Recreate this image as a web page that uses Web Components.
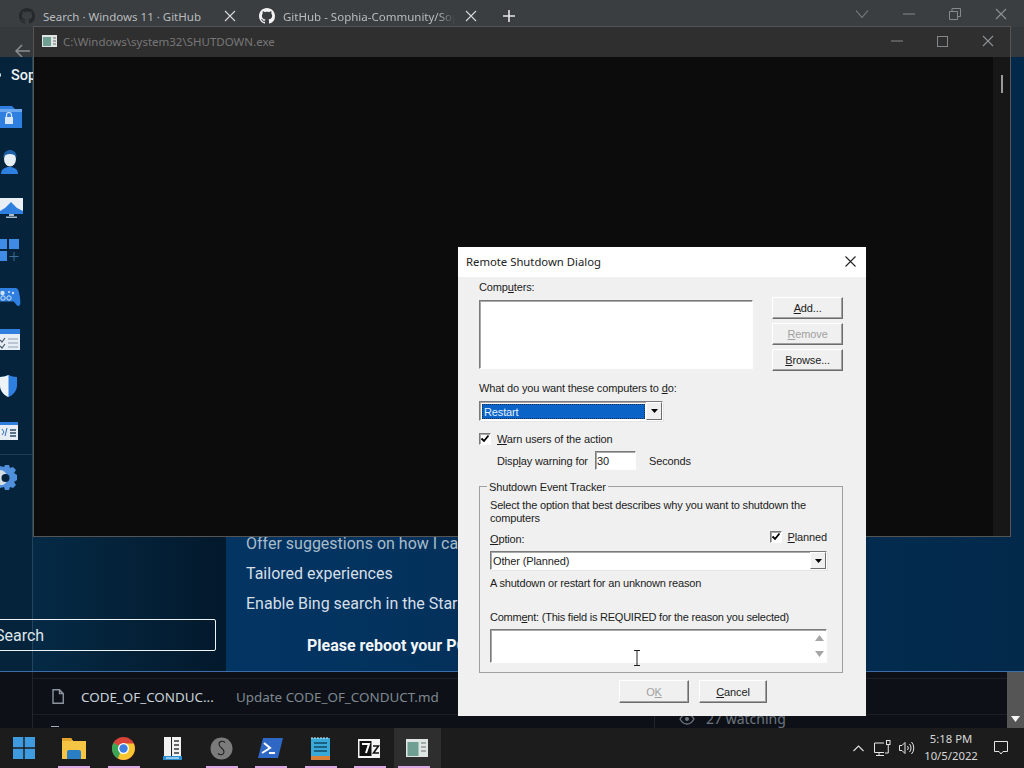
<!DOCTYPE html>
<html>
<head>
<meta charset="utf-8">
<title>Remote Shutdown Dialog</title>
<style>
  html, body { margin: 0; width: 1024px; height: 768px; overflow: hidden; background: #0d1117; }
</style>
</head>
<body>
<desktop-screen>
  <browser-window></browser-window>
  <console-window></console-window>
  <shutdown-dialog></shutdown-dialog>
  <win-taskbar slot="bar"></win-taskbar>
</desktop-screen>

<script>
// small helper so every element is just a style + markup string
function shadow(el, html) {
  el.attachShadow({ mode: 'open' }).innerHTML = html
}

const GH_PATH = 'M8 0C3.58 0 0 3.58 0 8c0 3.54 2.29 6.53 5.47 7.59.4.07.55-.17.55-.38 0-.19-.01-.82-.01-1.49-2.01.37-2.53-.49-2.69-.94-.09-.23-.48-.94-.82-1.13-.28-.15-.68-.52-.01-.53.63-.01 1.08.58 1.23.82.72 1.21 1.87.87 2.33.66.07-.52.28-.87.51-1.07-1.78-.2-3.64-.89-3.64-3.95 0-.87.31-1.59.82-2.15-.08-.2-.36-1.02.08-2.12 0 0 .67-.21 2.2.82.64-.18 1.32-.27 2-.27.68 0 1.36.09 2 .27 1.53-1.04 2.2-.82 2.2-.82.44 1.1.16 1.92.08 2.12.51.56.82 1.27.82 2.15 0 3.07-1.87 3.75-3.65 3.95.29.25.54.73.54 1.48 0 1.07-.01 1.93-.01 2.2 0 .21.15.46.55.38A8.013 8.013 0 0016 8c0-4.42-3.58-8-8-8z'

const X_ICON = c => `<svg width="12" height="12" viewBox="0 0 12 12"><path d="M1 1l10 10M11 1L1 11" stroke="${c}" stroke-width="1.1" fill="none"/></svg>`

class DesktopScreen extends HTMLElement {
  constructor() {
    super()
    shadow(this, `
    <style>
      :host { display: grid; grid-template-rows: 728px 40px; width: 1024px; height: 768px; position: relative; overflow: hidden; }
    </style>
    <slot></slot>
    <slot name="bar"></slot>`)
  }
}

class BrowserWindow extends HTMLElement {
  constructor() {
    super()
    shadow(this, `
    <style>
      :host { display: flex; flex-direction: column; height: 728px; font-family: "Noto Sans", sans-serif; }
      .tabs { height: 27px; background: #3a3e41; display: flex; align-items: center; color: #b9bcbe; font-size: 11.5px; position: relative; }
      .tab { display: flex; align-items: center; height: 27px; box-sizing: border-box; padding-top: 5px; }
      .t1 { width: 244px; padding-left: 19px; }
      .t1 svg { margin-right: 8px; flex: none; }
      .t1 span { width: 184px; white-space: nowrap; }
      .t2 { width: 244px; padding-left: 15px; }
      .t2 svg { margin-right: 8px; flex: none; }
      .t2 span { width: 172px; margin-right: 10px; white-space: nowrap; overflow: hidden; -webkit-mask-image: linear-gradient(90deg,#000 90%,transparent); }
      .plus { margin: 5px 0 0 15px; width: 12px; height: 12px; }
      .ctl { margin-left: auto; display: flex; align-items: center; gap: 34px; padding-right: 17px; }
      .nav { height: 30px; background: #35393c; padding: 17px 0 0 15px; display: flex; align-items: center; box-sizing: border-box; }
      .app { height: 614px; display: flex; border-bottom: 1px solid #3b6ea8; box-sizing: content-box; font-family: Roboto, sans-serif; color: #e8edf2; }
      .side { width: 33px; flex: none; background: #05233a; border-right: 1px solid #24445c; box-sizing: border-box; padding-top: 38px; display: flex; flex-direction: column; }
      .side div { height: 45px; box-sizing: border-box; display: flex; align-items: center; }
      .side .last { border-bottom: 1px solid #1e3d52; }
      .left { width: 193px; flex: none; background: linear-gradient(90deg,#052a45,#03192c); padding-top: 562px; box-sizing: border-box; }
      .search { margin-left: -73px; width: 256px; height: 32px; box-sizing: border-box; border: 1px solid #eef3f7; border-radius: 2px; font-size: 16px; line-height: 31px; padding-left: 34px; color: #dfe6ec; }
      .right { flex: 1; background: linear-gradient(90deg,#033563,#03305a 35%,#02294a); padding: 472px 0 0 20px; font-size: 16px; line-height: 30px; white-space: nowrap; color: #d5dfe8; overflow: hidden; }
      .right div:first-child { color: #a9bccb; }
      .right b { display: block; margin: 12px 0 0 61px; color: #f2f6f9; font-weight: 700; }
      .brand { position: absolute; left: 11px; top: 67px; font: 500 14.5px Roboto, sans-serif; color: #eef3f7; }
      .dot { position: absolute; left: -2px; top: 73px; width: 3px; height: 4px; background: #cfd8df; border-radius: 2px; }
      .files { flex: 1; background: #0d1117; position: relative; font-size: 13.4px; display: flex; overflow: hidden; }
      .gutter { width: 32px; flex: none; border-right: 1px solid #21262d; }
      .rows { flex: 1; padding-top: 6px; }
      .row { height: 37px; border-top: 1px solid #1b2027; border-bottom: 1px solid #1b2027; display: flex; align-items: center; box-sizing: border-box; padding-left: 19px; }
      .row svg { margin-right: 17px; flex: none; }
      .name { width: 155px; color: #c9d1d9; white-space: nowrap; }
      .msg { color: #7f8790; white-space: nowrap; }
      .watch { position: absolute; left: 679px; top: 37px; color: #6e7681; font-size: 14px; display: flex; gap: 11px; align-items: center; }
      .rule { position: absolute; left: 654px; top: 40px; width: 1px; height: 20px; background: #21262d; }
      .tick { position: absolute; left: 51px; top: 54px; width: 8px; height: 1px; background: #aab; }
      .bar { width: 17px; flex: none; background: #555; position: relative; }
      .bar svg { position: absolute; left: 4px; top: 44px; }
    </style>
    <div class="tabs">
      <div class="tab t1">
        <svg width="16" height="16" viewBox="0 0 16 16"><path fill="#26292c" d="${GH_PATH}"/></svg>
        <span>Search · Windows 11 · GitHub</span>
        ${X_ICON('#d6d8da')}
      </div>
      <div class="tab t2">
        <svg width="16" height="16" viewBox="0 0 16 16"><path fill="#f2f2f2" d="${GH_PATH}"/></svg>
        <span>GitHub - Sophia-Community/Sophia</span>
        ${X_ICON('#d6d8da')}
      </div>
      <svg class="plus" viewBox="0 0 12 12"><path d="M6 0v12M0 6h12" stroke="#e6e6e6" stroke-width="1.6"/></svg>
      <div class="ctl">
        <svg width="14" height="10" viewBox="0 0 14 10"><path d="M1 1.5l6 7 6-7" fill="none" stroke="#7d8184" stroke-width="1.1"/></svg>
        <svg width="12" height="2" viewBox="0 0 12 2"><path d="M0 1h12" stroke="#85888b"/></svg>
        <svg width="12" height="12" viewBox="0 0 12 12"><path d="M.5 3.5h8v8h-8zM3 3V.5h8.500v8H9" fill="none" stroke="#85888b"/></svg>
        ${X_ICON('#8f9295')}
      </div>
    </div>
    <div class="nav">
      <svg width="15" height="14" viewBox="0 0 15 14"><path d="M15 7H1.500M7 1L1 7l6 6" fill="none" stroke="#8c8f92" stroke-width="1.500"/></svg>
    </div>
    <div class="app">
      <div class="side">
        <div><svg style="margin-top:-4px" width="32" height="24" viewBox="0 0 32 24"><path d="M0 2h12l3 3h7v19H0z" fill="#2f7fe0"/><path d="M0 5h22v3H0z" fill="#69a8ee"/><rect x="5" y="13" width="8" height="7" fill="#d8e8fa"/><path d="M6.500 13v-2a2.500 2.500 0 015 0v2" fill="none" stroke="#d8e8fa" stroke-width="1.200"/></svg></div>
        <div><svg style="margin-top:-2px" width="32" height="24" viewBox="0 0 32 24"><path d="M1 24c0-5 4-7 8.500-7s8.500 2 8.500 7z" fill="#2f7fe0"/><ellipse cx="10" cy="9" rx="6" ry="7.500" fill="#e6eef6"/><path d="M3.500 8C3 2 7 0 10 0s7 2 6.500 8c-1-3-3-4-6.500-4S4.500 5 3.500 8z" fill="#1d5fa8"/></svg></div>
        <div><svg width="32" height="24" viewBox="0 0 32 24"><rect x="0" y="2" width="23" height="16" fill="#e9eff5"/><path d="M0 15l5-3 6-6 6 6 6 3v3H0z" fill="#2f7fe0"/><path d="M9 18h5v2H9zM6 20.500h11V22H6z" fill="#a9bccb"/></svg></div>
        <div><svg style="margin-top:-6px" width="32" height="24" viewBox="0 0 32 24"><path d="M0 1h7v10H0zM9 1h10v10H9zM0 13h7v10H0z" fill="#3f8be6"/><path d="M14 14v9M9.500 18.500h9" stroke="#3f6f96" stroke-width="1"/></svg></div>
        <div><svg style="margin-top:-2px" width="32" height="24" viewBox="0 0 32 24"><path d="M0 3h15c3 0 4 2 5 10 .7 5 .5 8-1.500 8-2 0-3-3-5-4.500H0z" fill="#2f7fe0"/><circle cx="2.500" cy="8" r="2.200" fill="#cfe2f7"/><circle cx="9" cy="13" r="2.200" fill="none" stroke="#cfe2f7"/><circle cx="3" cy="13" r="2.200" fill="none" stroke="#cfe2f7"/><circle cx="13" cy="8" r="1.200" fill="#cfe2f7"/><circle cx="9" cy="7" r="1" fill="#cfe2f7"/></svg></div>
        <div><svg style="margin-top:-8px" width="32" height="24" viewBox="0 0 32 24"><rect x="0" y="2" width="20" height="21" fill="#e6edf5"/><rect x="0" y="2" width="20" height="5" fill="#2f7fe0"/><path d="M0 13l2 2 3-4M0 19l2 2 3-4" fill="none" stroke="#4a5a6a" stroke-width="1.200"/><path d="M8 12h10M8 16h10M8 20h10" stroke="#8fa0b0"/></svg></div>
        <div><svg style="margin-top:-4px" width="32" height="24" viewBox="0 0 32 24"><path d="M0 3C3 3 6 2 8.500 1 11 2 14 3 17 3v8c0 6-4 10-8.500 12C4 21 0 17 0 11z" fill="#2f7fe0"/><path d="M0 3c3 0 6-1 8.500-2v22C4 21 0 17 0 11z" fill="#eef3f8"/></svg></div>
        <div class="last"><svg style="margin-top:-2px" width="32" height="24" viewBox="0 0 32 24"><rect x="0" y="3" width="18" height="18" fill="#e6edf5"/><rect x="0" y="3" width="18" height="3" fill="#2f7fe0"/><path d="M2 10l2 3-2 3M7 9l-2 8" fill="none" stroke="#2f6fb8"/><path d="M10 11h6M10 14h6M10 17h6" stroke="#2c4a66" stroke-width="1.300"/></svg></div>
        <div><svg width="32" height="26" viewBox="0 0 32 26"><path d="M5 0h4l1 3 3-1 3 3-2 3 3 2v5l-3 2 2 3-3 3-3-1-1 3H5l-1-3-4 1V1l4 1z" fill="#4f8fdc"/><path d="M0 5a8 8 0 013 15H0z" fill="#d5dde5"/><circle cx="5.500" cy="13" r="4" fill="#06243c"/></svg></div>
      </div>
      <div class="left"><div class="search">Search</div></div>
      <div class="right">
        <div>Offer suggestions on how I can further customize my device</div>
        <div>Tailored experiences</div>
        <div>Enable Bing search in the Start Menu</div>
        <b>Please reboot your PC</b>
      </div>
    </div>
    <div class="files">
      <div class="gutter"></div>
      <div class="rows">
        <div class="row">
          <svg width="12" height="15" viewBox="0 0 12 15"><path d="M1 .75h6.500l3.750 3.750V14.250H1zM7.500.75V4.500h3.750" fill="none" stroke="#8b949e" stroke-width="1.400"/></svg>
          <span class="name">CODE_OF_CONDUC...</span>
          <span class="msg">Update CODE_OF_CONDUCT.md</span>
        </div>
      </div>
      <div class="bar"><svg width="9" height="6" viewBox="0 0 9 6"><path d="M0 0h9L4.500 6z" fill="#f4f4f4"/></svg></div>
      <div class="tick"></div>
      <div class="rule"></div>
      <div class="watch">
        <svg width="16" height="12" viewBox="0 0 16 12"><path d="M1 6c2-3.500 4.500-5 7-5s5 1.500 7 5c-2 3.500-4.500 5-7 5S3 9.500 1 6z" fill="none" stroke="#6e7681" stroke-width="1.300"/><circle cx="8" cy="6" r="2" fill="#6e7681"/></svg>
        <span>27 watching</span>
      </div>
    </div>
    <div class="brand">Sop</div>
    <div class="dot"></div>`)
  }
}

class ConsoleWindow extends HTMLElement {
  constructor() {
    super()
    shadow(this, `
    <style>
      :host { position: absolute; left: 33px; top: 26px; width: 978px; height: 511px; box-sizing: border-box; border: 1px solid #555; display: flex; flex-direction: column; font-family: "Noto Sans", sans-serif; background: #0c0c0c; }
      .title { height: 30px; flex: none; background: #2f2f2f; display: flex; align-items: center; padding: 0 0 2px 8px; box-sizing: border-box; color: #777; font-size: 11.5px; }
      .title svg.app { margin-right: 6px; }
      .btns { margin-left: auto; display: flex; align-items: center; gap: 34px; padding-right: 16px; }
      .body { flex: 1; display: flex; justify-content: flex-end; }
      .sb { width: 17px; background: #171717; padding: 18px 0 0 8px; box-sizing: border-box; }
      .thumb { width: 2px; height: 18px; background: #9a9a9a; }
    </style>
    <div class="title">
      <svg class="app" width="15" height="12" viewBox="0 0 15 12"><rect width="15" height="12" fill="#dfe5e2"/><rect x="1" y="2" width="8" height="9" fill="#6f9f92"/><path d="M11 3h3M11 6h3M11 9h3" stroke="#6b6f70"/></svg>
      <span>C:\\Windows\\system32\\SHUTDOWN.exe</span>
      <div class="btns">
        <svg width="12" height="2" viewBox="0 0 12 2"><path d="M0 1h12" stroke="#85888b"/></svg>
        <svg width="11" height="11" viewBox="0 0 11 11"><rect x=".5" y=".5" width="10" height="10" fill="none" stroke="#85888b"/></svg>
        ${X_ICON('#8f9295')}
      </div>
    </div>
    <div class="body"><div class="sb"><div class="thumb"></div></div></div>`)
  }
}

class ClassicButton extends HTMLElement {
  constructor() {
    super()
    shadow(this, `
    <style>
      :host { display: flex; align-items: center; justify-content: center; box-sizing: border-box; height: 22px; background: #f0f0f0; border: 1px solid; border-color: #fff #6d6d6d #6d6d6d #fff; box-shadow: inset -1px -1px 0 #a0a0a0; }
      :host([disabled]) { color: #a0a0a0; }
    </style>
    <slot></slot>`)
  }
}

class SunkenField extends HTMLElement {
  constructor() {
    super()
    shadow(this, `
    <style>
      :host { display: block; box-sizing: border-box; background: #fff; border: 1px solid; border-color: #7a7a7a #fdfdfd #fdfdfd #7a7a7a; box-shadow: inset 1px 1px 0 #a9a9a9; }
    </style>
    <slot></slot>`)
  }
}

class ClassicCombo extends HTMLElement {
  constructor() {
    super()
    const on = this.hasAttribute('selected')
    shadow(this, `
    <style>
      :host { display: flex; box-sizing: border-box; height: 20px; background: #fff; border: 1px solid; border-color: #7a7a7a #fdfdfd #fdfdfd #7a7a7a; box-shadow: inset 1px 1px 0 #a9a9a9, 1px 1px 0 #e6e6e6; }
      .val { flex: 1; margin: 2px 1px 1px 2px; white-space: nowrap; ${on ? 'padding:0 2px;line-height:16px;background:#0a64c8;color:#e4f0fb;outline:1px dotted #17324e;outline-offset:-1px;' : 'padding:0;line-height:15px;'} }
      .arrow { width: 16px; flex: none; background: #f0f0f0; border: 1px solid; border-color: #fff #6d6d6d #6d6d6d #fff; box-sizing: border-box; display: flex; align-items: center; justify-content: center; }
    </style>
    <div class="val"><slot></slot></div>
    <div class="arrow"><svg width="7" height="4" viewBox="0 0 7 4"><path d="M0 0h7L3.500 4z" fill="#000"/></svg></div>`)
  }
}

class ClassicCheck extends HTMLElement {
  constructor() {
    super()
    shadow(this, `
    <style>
      :host { display: flex; align-items: center; gap: 6px; height: 14px; line-height: 14px; white-space: nowrap; }
      .box { width: 12px; height: 12px; box-sizing: border-box; background: #fff; border: 1px solid; border-color: #7a7a7a #fdfdfd #fdfdfd #7a7a7a; box-shadow: inset 1px 1px 0 #a9a9a9; flex: none; }
      svg { display: block; }
    </style>
    <div class="box"><svg width="10" height="10" viewBox="0 0 10 10"><path d="M1.500 4.500L4 7l4.500-5.500" fill="none" stroke="#000" stroke-width="1.800"/></svg></div>
    <span><slot></slot></span>`)
  }
}

class ShutdownDialog extends HTMLElement {
  constructor() {
    super()
    shadow(this, `
    <style>
      :host { position: absolute; left: 458px; top: 247px; width: 408px; height: 469px; display: flex; flex-direction: column; background: #f0f0f0; color: #1c1c1c; font: 11px/14px "Liberation Sans", sans-serif; letter-spacing: -.14px; box-shadow: 0 0 1px #222; }
      .title { height: 30px; flex: none; background: #fff; display: flex; align-items: center; justify-content: space-between; padding: 0 10px 2px 8px; box-sizing: border-box; font: 11.3px "Noto Sans", sans-serif; letter-spacing: 0; color: #222; }
      .title svg { display: block; }
      .body { padding: 3px 23px 0 21px; display: flex; flex-direction: column; }
      .top { display: flex; gap: 19px; }
      .col { width: 275px; }
      .list { height: 69px; margin-top: 6px; }
      .stack { width: 71px; margin-top: 17px; display: flex; flex-direction: column; gap: 4px; }
      .ask { margin-top: 10px; }
      .combo1 { width: 184px; margin-top: 6px; }
      .warn { margin-top: 11px; }
      .delay { margin: 5px 0 0 18px; height: 19px; display: flex; align-items: center; white-space: nowrap; }
      .delay > span:first-child { width: 98px; }
      .secs { width: 41px; height: 19px; margin-right: 13px; padding-left: 1px; line-height: 18px; }
      .group { position: relative; margin-top: 16px; height: 187px; box-sizing: border-box; border: 1px solid #a0a0a0; padding: 12px 15px 0 10px; display: flex; flex-direction: column; }
      .legend { position: absolute; left: 7px; top: -7px; background: #f0f0f0; padding: 0 2px; white-space: nowrap; }
      .desc { line-height: 13px; white-space: nowrap; letter-spacing: -.18px; }
      .opt { display: flex; justify-content: space-between; margin-top: 6px; height: 14px; }
      .opt span { padding-top: 1px; }
      .opt classic-check { margin-top: -1px; }
      .combo2 { margin-top: 6px; height: 19px; }
      .why { margin-top: 6px; letter-spacing: -.18px; }
      .cmt { margin-top: 20px; letter-spacing: -.23px; white-space: nowrap; }
      .txt { position: relative; height: 34px; margin-top: 5px; box-shadow: inset 1px 1px 0 #a9a9a9; }
      .spin { position: absolute; right: 0; top: 0; bottom: 0; width: 14px; display: flex; flex-direction: column; justify-content: center; gap: 10px; align-items: center; }
      .spin svg { display: block; }
      .beam { position: absolute; left: 142px; top: 20px; }
      .actions { display: flex; gap: 10px; margin: 7px 0 0 140px; }
      .actions classic-button { height: 23px; }
      u { text-decoration-thickness: 1px; }
    </style>
    <div class="title">
      <span>Remote Shutdown Dialog</span>
      <svg width="11" height="11" viewBox="0 0 11 11"><path d="M.5.500l10 10M10.500.500l-10 10" stroke="#222" stroke-width="1.100"/></svg>
    </div>
    <div class="body">
      <div class="top">
        <div class="col">
          <div>Comp<u>u</u>ters:</div>
          <sunken-field class="list"></sunken-field>
        </div>
        <div class="stack">
          <classic-button><u>A</u>dd...</classic-button>
          <classic-button disabled><u>R</u>emove</classic-button>
          <classic-button><u>B</u>rowse...</classic-button>
        </div>
      </div>
      <div class="ask">What do you want these computers to <u>d</u>o:</div>
      <classic-combo class="combo1" selected>Restart</classic-combo>
      <classic-check class="warn"><u>W</u>arn users of the action</classic-check>
      <div class="delay">
        <span>Disp<u>l</u>ay warning for</span>
        <sunken-field class="secs">30</sunken-field>
        <span>Seconds</span>
      </div>
      <div class="group">
        <div class="legend">Shutdown Event Tracker</div>
        <div class="desc">Select the option that best describes why you want to shutdown the<br>computers</div>
        <div class="opt">
          <span><u>O</u>ption:</span>
          <classic-check><u>P</u>lanned</classic-check>
        </div>
        <classic-combo class="combo2">Other (Planned)</classic-combo>
        <div class="why">A shutdown or restart for an unknown reason</div>
        <div class="cmt">Comm<u>e</u>nt: (This field is REQUIRED for the reason you selected)</div>
        <sunken-field class="txt">
          <div class="spin">
            <svg width="9" height="6" viewBox="0 0 9 6"><path d="M0 6h9L4.500 0z" fill="#a6a6a6"/></svg>
            <svg width="9" height="6" viewBox="0 0 9 6"><path d="M0 0h9L4.500 6z" fill="#a6a6a6"/></svg>
          </div>
          <svg class="beam" width="8" height="16" viewBox="0 0 8 16"><path d="M1 .5h6M1 15.500h6M4 .5v15" fill="none" stroke="#222" stroke-width="1"/></svg>
        </sunken-field>
      </div>
      <div class="actions">
        <classic-button disabled style="width:70px">O<u>K</u></classic-button>
        <classic-button style="width:68px"><u>C</u>ancel</classic-button>
      </div>
    </div>`)
  }
}

class TaskButton extends HTMLElement {
  constructor() {
    super()
    shadow(this, `
    <style>
      :host { display: flex; align-items: center; justify-content: center; width: 49.25px; height: 40px; position: relative; flex: none; }
      :host([active]) { background: #2e2e2e; width: 47px; padding-right: 2px; box-sizing: border-box; }
      :host([running])::after { content: ""; position: absolute; left: 9px; bottom: 0; width: 32px; height: 2px; background: #dba8e4; }
      :host([active])::after { left: 4px; }
    </style>
    <slot></slot>`)
  }
}

class WinTaskbar extends HTMLElement {
  constructor() {
    super()
    shadow(this, `
    <style>
      :host { display: flex; align-items: center; height: 40px; background: #1c1c1c; color: #e6e6e6; font: 11.3px "Noto Sans", sans-serif; }
      .tray { margin-left: auto; display: flex; align-items: center; height: 40px; }
      .tray svg { display: block; }
      .caret { margin-right: 10px; }
      .net { margin-right: 8px; }
      .vol { margin-right: 6px; }
      .clock { width: 60px; text-align: center; line-height: 17px; color: #d8d8d8; padding-bottom: 2px; }
      .note { margin: 0 16px 0 13px; }
    </style>
    <slot></slot>
    <task-button style="padding-right:1px;box-sizing:border-box">
      <svg width="22" height="22" viewBox="0 0 22 22"><path d="M0 0h10.300v10.300H0zM11.700 0H22v10.300H11.700zM0 11.700h10.300V22H0zM11.700 11.700H22V22H11.700z" fill="#3f9be0"/></svg>
    </task-button>
    <task-button running>
      <svg width="24" height="22" viewBox="0 0 24 22"><path d="M0 1h9l2 3h13v18H0z" fill="#f6c544"/><path d="M0 1h9l2 3H0z" fill="#e5a52a"/><path d="M5 15q0-2 2-2h10q2 0 2 2v7H5z" fill="#2a7fc4"/></svg>
    </task-button>
    <task-button running>
      <svg width="23" height="23" viewBox="0 0 23 23"><circle cx="11.500" cy="11.500" r="11.500" fill="#d9433a"/><path d="M1.500 5.800A11.500 11.500 0 006 21.600l5.500-10z" fill="#3aa655"/><path d="M11.500 6.500h10.300A11.500 11.500 0 016 21.600z" fill="#f7c52f"/><circle cx="11.500" cy="11.500" r="5.500" fill="#fff"/><circle cx="11.500" cy="11.500" r="4.200" fill="#3f7fe0"/></svg>
    </task-button>
    <task-button>
      <svg width="19" height="23" viewBox="0 0 19 23"><path d="M1 0h7v19H1zM9 0h9v19H9z" fill="#f1f1f1"/><path d="M11 3h5v2h-5zM11 7h5v2h-5zM11 11h5v2h-5zM11 15h5v2h-5z" fill="#666"/><path d="M0 19h19v4H0z" fill="#2a8fd0"/><path d="M3 20.500h13v1H3z" fill="#fff"/></svg>
    </task-button>
    <task-button running>
      <svg width="23" height="23" viewBox="0 0 23 23"><circle cx="11.500" cy="11.500" r="11" fill="#7b7b7b"/><path d="M15 5.500c-2-2-6-1.500-6 1.500 0 4 5 4 5 8 0 3-4 3.500-6 1.500" fill="none" stroke="#232323" stroke-width="1.100"/></svg>
    </task-button>
    <task-button running>
      <svg width="25" height="20" viewBox="0 0 25 20"><path d="M5 0h20l-5 20H0z" fill="#2f68c4"/><path d="M6 5l6 5-8 5" fill="none" stroke="#fff" stroke-width="2"/><path d="M11 15h6" stroke="#fff" stroke-width="2"/></svg>
    </task-button>
    <task-button running>
      <svg width="19" height="23" viewBox="0 0 19 23"><rect y="1" width="19" height="18" fill="#39a9d8"/><path d="M1 0v2M4 0v2M7 0v2M10 0v2M13 0v2M16 0v2" stroke="#d8eef8"/><path d="M3 6h13M3 10h13M3 14h13" stroke="#124a68" stroke-width="1.500"/><rect y="19" width="19" height="4" fill="#d9813a"/></svg>
    </task-button>
    <task-button running>
      <svg width="22" height="19" viewBox="0 0 22 19"><rect width="22" height="19" fill="#f4f4f4"/><rect x="1.500" y="2" width="12" height="15" fill="#111"/><path d="M4 5h7l-3 9" fill="none" stroke="#fff" stroke-width="2"/><path d="M15 7h5.500l-5 7h5.500" fill="none" stroke="#111" stroke-width="1.600"/></svg>
    </task-button>
    <task-button active running>
      <svg width="22" height="18" viewBox="0 0 22 18"><rect width="22" height="18" fill="#dfe5e2"/><rect x="1.500" y="3" width="11" height="14" fill="#6f9f92"/><path d="M15 4h5M15 8h5M15 12h5" stroke="#6b6f70"/></svg>
    </task-button>
    <div class="tray">
      <svg class="caret" width="11" height="7" viewBox="0 0 11 7"><path d="M.5 6l5-5 5 5" fill="none" stroke="#e0e0e0" stroke-width="1.100"/></svg>
      <svg class="net" width="17" height="16" viewBox="0 0 17 16"><path d="M10 3H.5v9.500H10M5 12.500v2.500M2 15.500h8" fill="none" stroke="#e6e6e6"/><rect x="12.500" y=".5" width="3.500" height="4" fill="none" stroke="#e6e6e6"/><path d="M14.250 5v8H11" fill="none" stroke="#e6e6e6"/></svg>
      <svg class="vol" width="16" height="14" viewBox="0 0 16 14"><path d="M.5 4.500h2.500l3-3v11l-3-3H.5zM8.500 5a3 3 0 010 4M10.500 3a6 6 0 010 8M12.500 1a9 9 0 010 12" fill="none" stroke="#e6e6e6"/></svg>
      <div class="clock">5:18 PM<br>10/5/2022</div>
      <svg class="note" width="14" height="14" viewBox="0 0 14 14"><path d="M.5.500h13v10h-4.500L7 13l-2-2.500H.5z" fill="none" stroke="#e6e6e6"/></svg>
    </div>`)
  }
}

customElements.define('desktop-screen', DesktopScreen)
customElements.define('browser-window', BrowserWindow)
customElements.define('console-window', ConsoleWindow)
customElements.define('classic-button', ClassicButton)
customElements.define('sunken-field', SunkenField)
customElements.define('classic-combo', ClassicCombo)
customElements.define('classic-check', ClassicCheck)
customElements.define('shutdown-dialog', ShutdownDialog)
customElements.define('task-button', TaskButton)
customElements.define('win-taskbar', WinTaskbar)
</script>
</body>
</html>
